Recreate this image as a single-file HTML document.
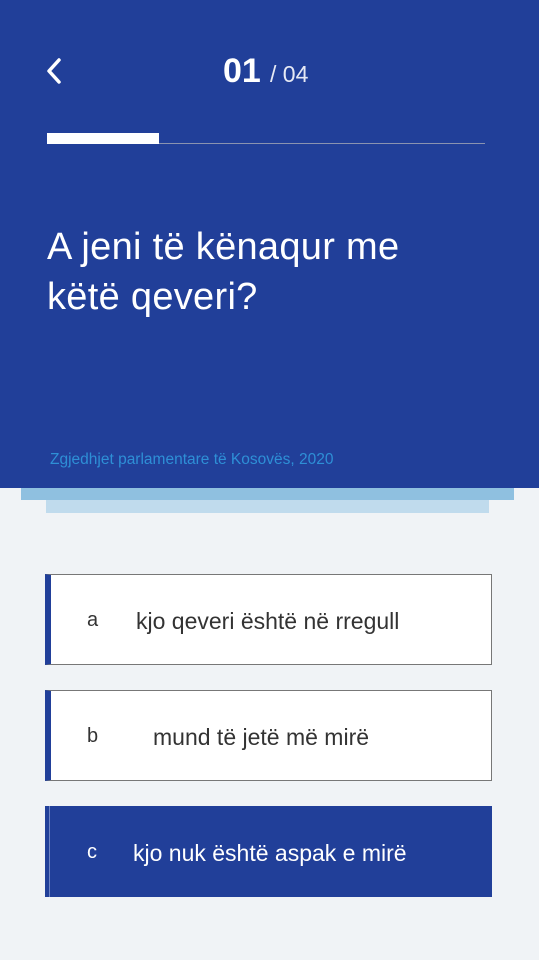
<!DOCTYPE html>
<html><head><meta charset="utf-8"><style>
body{margin:0;width:539px;height:960px;background:#f0f3f6;font-family:"Liberation Sans",sans-serif;position:relative;overflow:hidden}
.hdr{position:absolute;left:0;top:0;width:539px;height:488px;background:#213f99}
.l1{position:absolute;left:21px;top:488px;width:493px;height:12px;background:#8fc0e0}
.l2{position:absolute;left:46px;top:500px;width:443px;height:13px;background:#c0dbed}
.ab{position:absolute;color:#fff}
.opt{position:absolute;left:45px;width:447px;height:91px;box-sizing:border-box;border:1px solid #777;border-left:6px solid #213f99;background:#fff;color:#333}
.opt .k{position:absolute;left:36px;top:34px;font-size:20px}
.opt .t{position:absolute;top:33px;font-size:23px;font-weight:300;color:#333}
</style></head><body>
<div class="hdr"></div>
<svg class="ab" style="left:44px;top:56px" width="20" height="32" viewBox="0 0 20 32"><path d="M15 4 L5 15 L15 26" fill="none" stroke="#fff" stroke-width="3.5" stroke-linecap="round" stroke-linejoin="round"/></svg>
<div class="ab" style="left:223px;top:52px;font-size:34px;font-weight:bold">01</div>
<div class="ab" style="left:270px;top:61px;font-size:23px;font-weight:300;color:#e6e9f4">/ 04</div>
<div class="ab" style="left:47px;top:133px;width:112px;height:11px;background:#fff"></div>
<div class="ab" style="left:159px;top:143px;width:326px;height:1px;background:#8a93b0"></div>
<div class="ab" style="left:47px;top:222px;font-size:38px;font-weight:300;line-height:50px;letter-spacing:0.3px">A jeni të kënaqur me<br>këtë qeveri?</div>
<div class="ab" style="left:50px;top:451px;font-size:15.5px;color:#2e8fd6">Zgjedhjet parlamentare të Kosovës, 2020</div>
<div class="l1"></div><div class="l2"></div>
<div class="opt" style="top:574px"><span class="k">a</span><span class="t" style="left:85px">kjo qeveri është në rregull</span></div>
<div class="opt" style="top:690px"><span class="k">b</span><span class="t" style="left:102px">mund të jetë më mirë</span></div>
<div class="opt" style="top:806px;background:#213f99;border:none;border-left:4px solid #213f99"><div style="position:absolute;left:0;top:0;width:1px;height:91px;background:#6f84c4"></div><span class="k" style="color:#fff;left:38px;top:35px">c</span><span class="t" style="left:84px;top:34px;color:#fff">kjo nuk është aspak e mirë</span></div>
</body></html>
